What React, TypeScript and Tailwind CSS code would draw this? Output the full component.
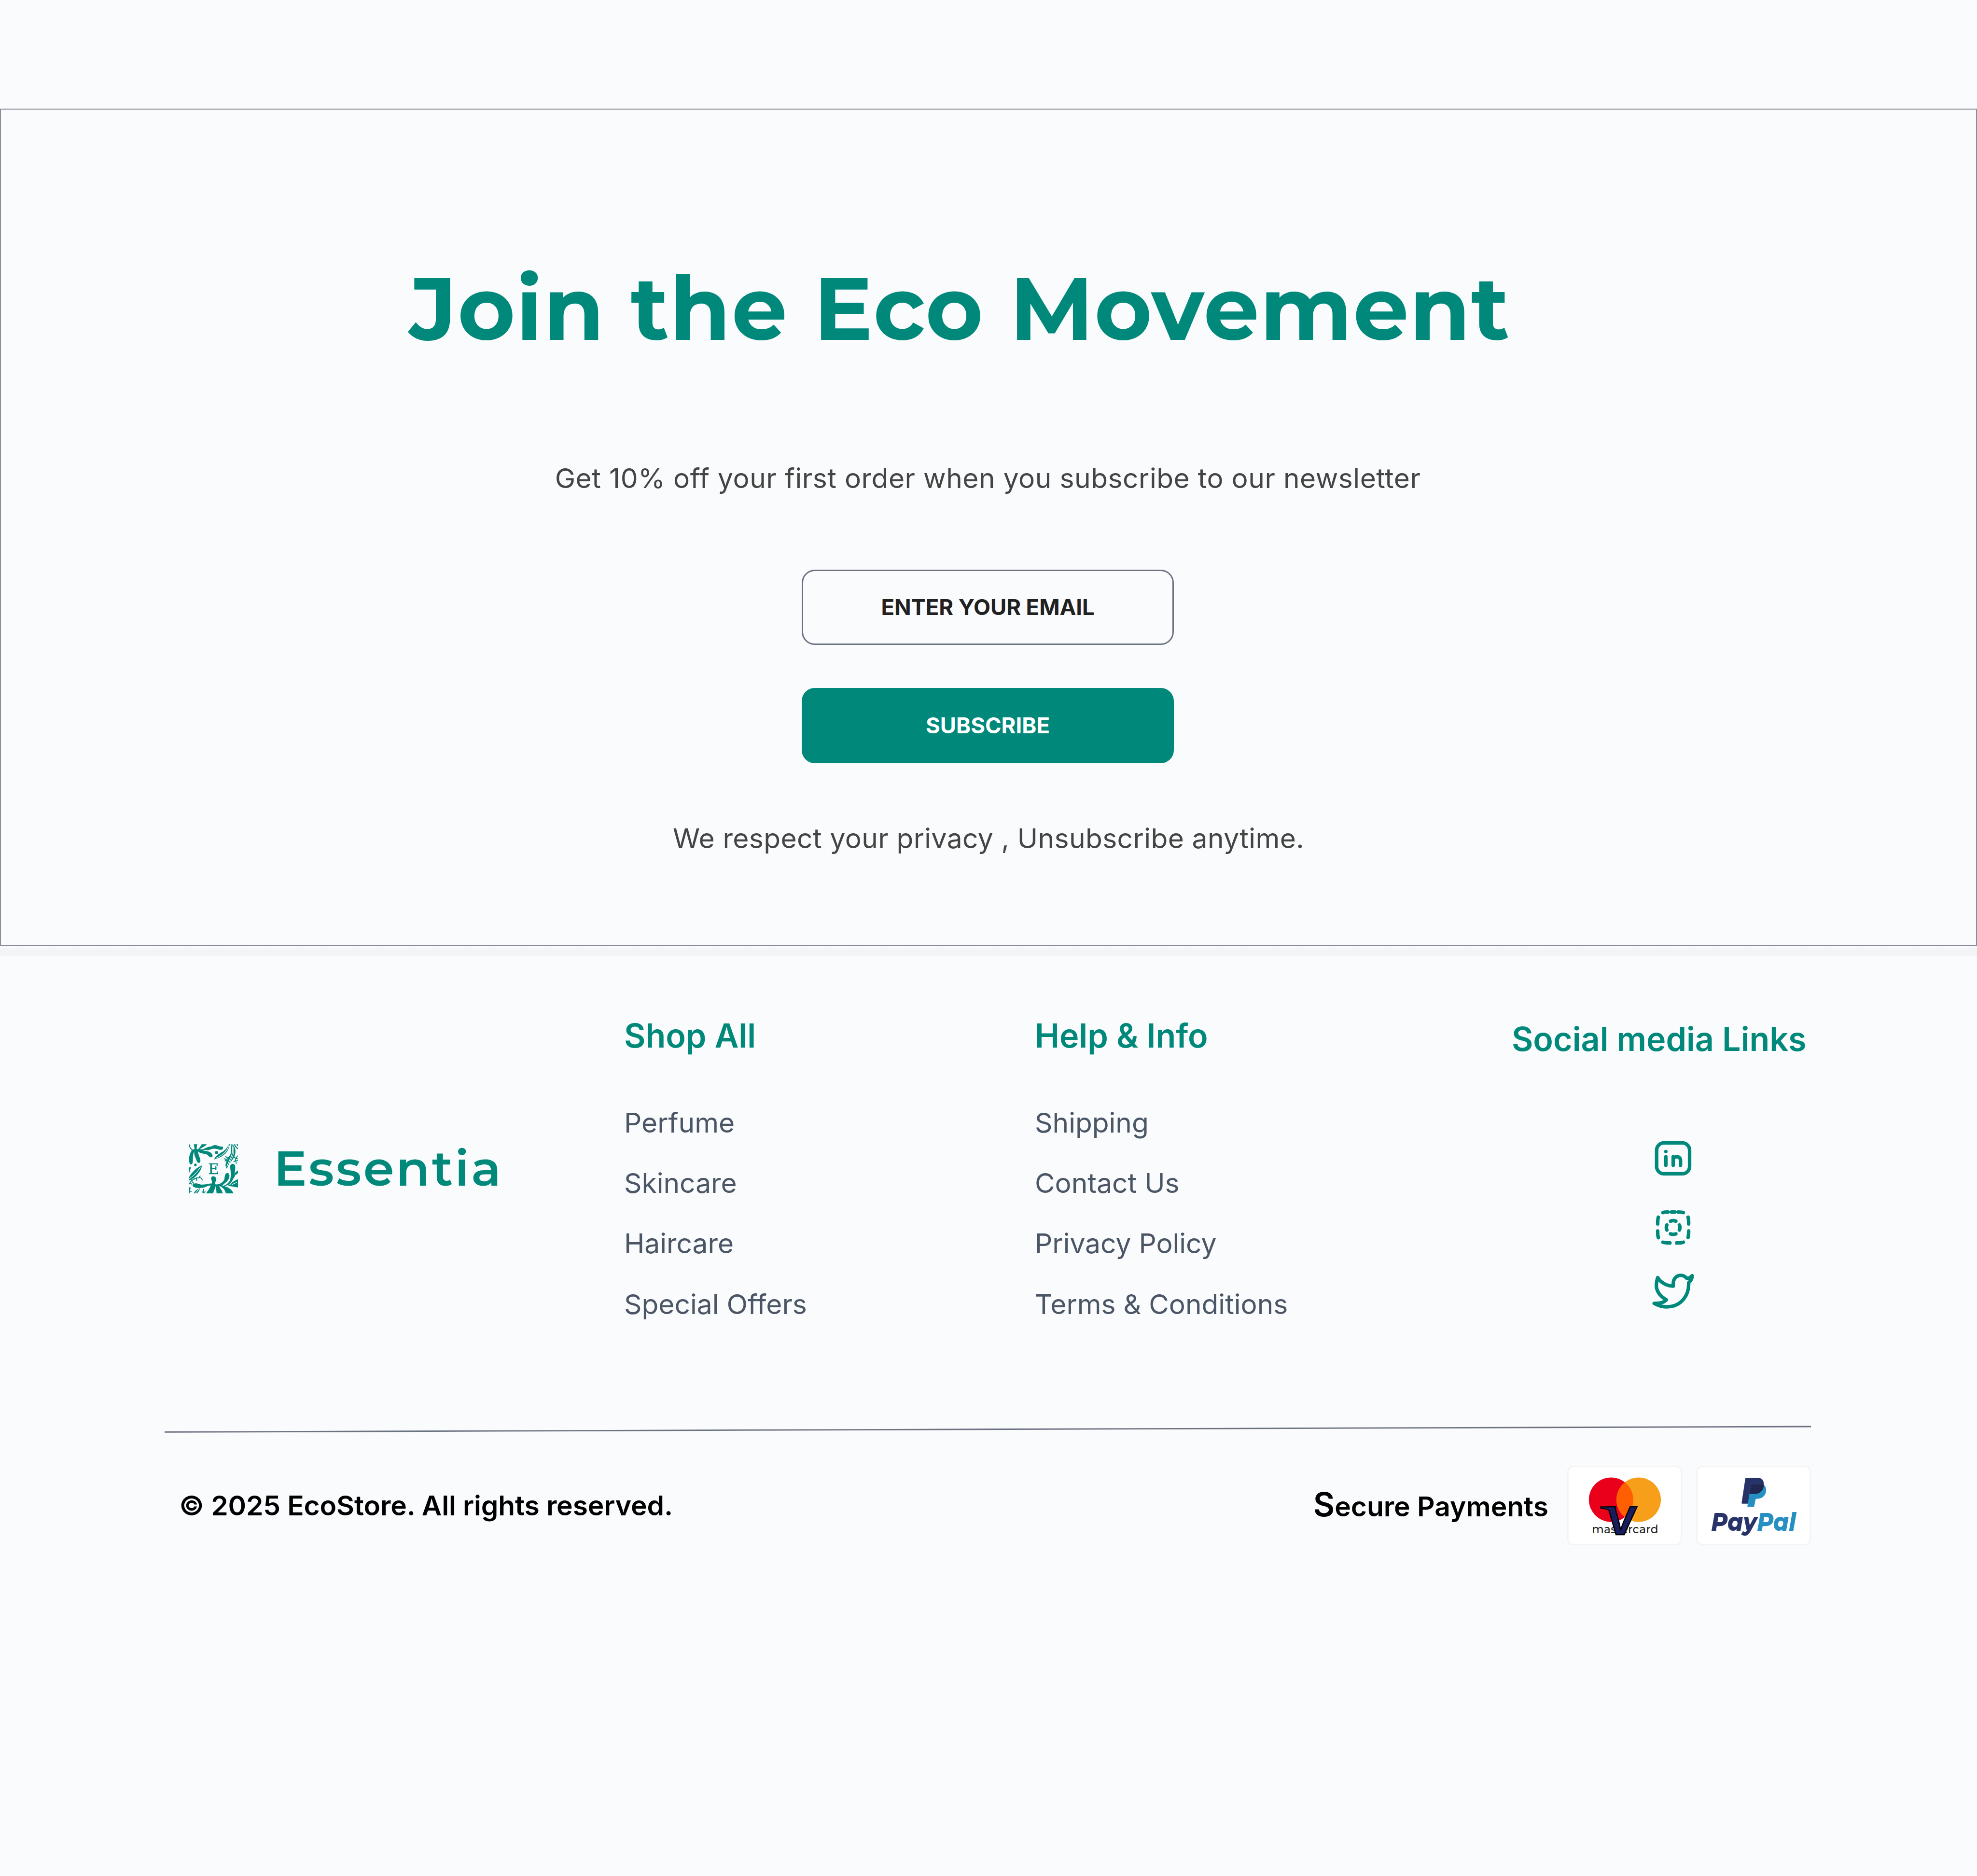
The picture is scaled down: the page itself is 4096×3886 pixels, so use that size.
import { ReactNode } from "react";

interface LinkColumnProps {
  title: string;
  links: string[];
  className?: string;
}

const shopLinks = ["Perfume", "Skincare", "Haircare", "Special Offers"];
const helpLinks = [
  "Shipping",
  "Contact Us",
  "Privacy Policy",
  "Terms & Conditions",
];

const LogoMark = () => (
  <svg viewBox="95 89 325 324" className="size-[102.4px] shrink-0">
    <g fill="#00897b">
      {/* top left bouquet */}
      <path d="M128 89h24c-5 12-5 24-4 38h-15c1-14-2-26-5-38z" />
      <path d="M180 89h34c-10 16-36 20-54 40l-10-4c14-8 22-20 30-36z" />
      <path d="M112 126c12-6 60-5 76-3 16-8 26-16 48-18 14-2 20-10 33-10 16 0 24 12 48 9 6 6 4 17-4 21-18 4-34-8-54-6-16 0-24 9-42 9-12 0-20-2-30 2 22 6 42 2 56 18 10 8 12 20 4 26-12 4-20-8-30-16-18-12-42-2-60-22-2 22 16 44 15 64-2 14-18 16-23 3-5-22-22-38-17-67-12 20-8 44-10 66-2 24-16 26-22 10-6-30-2-56 14-80z" />
      <circle cx="278" cy="144" r="10" />
      <circle cx="139" cy="225" r="8.5" />
      {/* top right leaves */}
      <path d="M306 145c26-12 42-34 53-56h6c-4 32-22 60-50 78-14 10-32 16-53 22 8-18 24-32 44-44z" />
      <path d="M370 89h12c12 44 8 70-10 100-10 20-16 42-26 61-16-18-8-44 8-66 20-28 24-52 16-95z" />
      <path d="M386 89c14 20 20 44 14 68-6 22-20 38-34 56 10-26 26-50 26-76 0-18-4-32-6-48z" />
      <path d="M392 89h8c4 12 10 20 20 26v8c-14-6-22-18-28-34zM408 89h12v14c-6-4-10-8-12-14z" />
      {/* left leaves */}
      <path d="M182 229c-4 30-22 54-44 74-16 14-30 20-43 26v-18c10-22 28-42 46-58 14-12 28-20 41-24z" />
      <path d="M95 246c4-5 8-8 14-9-2 18-6 32-14 46z" />
      <path d="M128 413c6-16 20-28 41-34-4 16-10 26-20 34z" />
      {/* bottom plant */}
      <path d="M237 361c-22-2-28 14-50 14-24 4-60 4-67-14 4-18 28-16 44-10 28 10 52-4 82-4 6-14-4-22-4-36 4-16 28-14 32 2 2 16-6 24-4 40 26 2 46-10 58-30 6-14 0-34 16-44 14-4 22 10 18 26-6 30-34 40-48 58z" />
      <path d="M367 238c0-26 33-28 34 0 0 30-6 70-24 100-12 18-30 26-60 26 26-8 42-20 50-40 8-26 4-56 0-86z" />
      <path d="M208 413c12-16 24-32 34-58h28c4 20-10 34-14 58z" />
      <path d="M278 413c0-22-6-36-8-52h26c0 18 22 32 22 52z" />
      <path d="M340 413c-6-20-14-38-50-54 40 2 84 14 100 54z" />
      <path d="M420 318c-20 8-42 22-66 44 24 4 46 8 66 12z" />
      <path d="M420 262c-14 4-24 20-34 46-4 10-8 20-14 30 14-16 28-44 48-60z" />
    </g>
    <g fill="none" stroke="#00897b" strokeWidth="6" strokeLinecap="round">
      <path d="M97 90c4 18 10 30 22 38" />
      <path d="M96 352c14-26 36-40 70-44 12 2 18 8 17 18M114 328l-6-10M132 318l-4-10M146 310l2 18M118 336l10 10M164 306l6-8M104 344l12 8" />
      <path d="M97 372c6 14 6 28 2 40M97 382l10-4M99 396l12 4M193 386v24M183 402l10 6 10-6" />
      <path d="M368 164c-10 12-22 22-34 36M352 180l-14-10M344 190l-16-6M356 176l2 16M340 196l12 4" />
      <path d="M416 166c-14 14-16 26-8 48M404 182l-10-8M402 196l-10 8M406 182l12 4M404 200l14-4" />
    </g>
    <g fill="none" stroke="#fafbfd" strokeWidth="4" strokeLinecap="round">
      <path d="M360 94c-12 42-40 66-84 86M378 92c14 52-4 78-18 110-6 14-10 22-14 34" />
      <path d="M172 240c-22 34-46 58-76 78M160 386c-8 8-14 18-20 26" />
      <path d="M404 290c-8 22-20 44-36 62M410 340l-30 14" />
    </g>
    <text
      x="258"
      y="286"
      textAnchor="middle"
      fontSize="97"
      fill="#00897b"
      stroke="#00897b"
      strokeWidth="1.5"
      className="font-['DejaVu_Serif',serif]"
    >
      E
    </text>
  </svg>
);

const SocialIcon = ({
  viewBox,
  children,
}: {
  viewBox: string;
  children: ReactNode;
}) => (
  <svg
    viewBox={viewBox}
    className="w-[94.8px] h-[79px]"
    fill="none"
    stroke="#00897b"
    strokeWidth="23"
    strokeLinecap="round"
    strokeLinejoin="round"
  >
    {children}
  </svg>
);

const PaymentCard = ({ children }: { children: ReactNode }) => (
  <div className="w-[238px] h-[165px] bg-white outline-3 -outline-offset-3 outline-[#f3f5f5] rounded-xl">
    <svg viewBox="0 0 251 174" className="size-full">
      {children}
    </svg>
  </div>
);

const LinkColumn = ({ title, links, className }: LinkColumnProps) => (
  <div className={className}>
    <h3 className="text-[68.3px] leading-[84px] font-semibold text-[#00897b]">
      {title}
    </h3>
    <ul className="mt-[98.7px] flex flex-col gap-[45.2px]">
      {links.map((link) => (
        <li key={link} className="text-[56.9px] leading-20 text-gray-600">
          {link}
        </li>
      ))}
    </ul>
  </div>
);

const Newsletter = () => (
  <section className="h-[1735px] border-2 border-[#8a8d99] flex flex-col items-center">
    <h1 className="self-start ml-[846px] mt-[301.8px] font-[Montserrat,sans-serif] text-[182px] leading-[220px] font-bold tracking-[0.01em] text-[#00897b] whitespace-nowrap">
      Join the Eco Movement
    </h1>
    <p className="mt-[202.7px] mr-[3px] text-[56.9px] leading-20 tracking-[0.53px] text-[#444444]">
      Get 10% off your first order when you subscribe to our newsletter
    </p>
    <div className="mt-[149px] mr-[3px] w-[771px] h-[156px] rounded-[27px] border-3 border-gray-500 flex items-center justify-center text-[45.5px] font-bold tracking-[-0.1px] text-[#212121]">
      ENTER YOUR EMAIL
    </div>
    <button className="mt-[88.6px] mr-[3px] w-[771px] h-[156px] rounded-[27px] bg-[#00897b] text-[45.5px] font-bold text-white">
      SUBSCRIBE
    </button>
    <p className="mt-[115.7px] text-[56.9px] leading-20 tracking-[0.4px] text-[#444444]">
      We respect your privacy , Unsubscribe anytime.
    </p>
  </section>
);

const SocialLinks = () => (
  <div className="pt-[7px]">
    <h3 className="text-[68.3px] leading-[84px] font-semibold tracking-[-0.05px] text-[#00897b] whitespace-nowrap">
      Social media Links
    </h3>
    <div className="mt-[166px] ml-[287px] flex flex-col">
      {/* linkedin */}
      <SocialIcon viewBox="138 119 300 250">
        <rect x="180" y="142.5" width="216" height="202.5" rx="48" />
        <circle cx="240.5" cy="199" r="11.5" fill="#00897b" stroke="none" />
        <path d="M240.5 233v56M288.5 233v56M288.5 258c0-16 9-25 24-25s24 10 24 25v31" />
      </SocialIcon>
      <div className="mt-[63.8px]">
        {/* instagram */}
        <SocialIcon viewBox="138 571 300 250">
          <path d="M221 599q11-4 34-4M277 595h22M321 595q24 0 34 4M386 629q4 11 4 44M390 719q0 31-4 43M311 798q34 0 44-5M267 798q-32 0-46-5M187 719q0 31 4 44M191 629q-4 11-4 44" />
          <path d="M271 655q17-7 35 0M271 738q17 7 35 0M247 680q-7 17 0 33M329 680q8 17 0 33" />
        </SocialIcon>
      </div>
      <div className="mt-[52.8px]">
        {/* twitter */}
        <SocialIcon viewBox="138 988 300 250">
          <path d="M187 1024c18 31 58 56 102 56v-18c0-32 23-52 51-52 18 0 30 10 39 20 13 0 26-10 34-18 0 18-8 33-23 46v12c0 60-40 146-145 146-30 0-60-11-81-23 31 2 61-3 80-23-34-20-66-50-66-95 0-20 4-35 9-51z" />
        </SocialIcon>
      </div>
    </div>
  </div>
);

const Footer = () => (
  <footer className="pl-[341px] pr-[344px]">
    <div className="pt-[123.4px] flex">
      <div className="w-[952px] pl-[49.6px] pt-[254.4px] flex items-start">
        <div className="pt-3">
          <LogoMark />
        </div>
        <span className="ml-[74px] font-[Montserrat,sans-serif] text-[102.4px] leading-[124px] font-semibold tracking-[0.04em] text-[#00897b]">
          Essentia
        </span>
      </div>
      <LinkColumn title="Shop All" links={shopLinks} className="w-[851px]" />
      <LinkColumn title="Help & Info" links={helpLinks} className="w-[988px]" />
      <SocialLinks />
    </div>

    <svg viewBox="0 0 3411 16" className="mt-[211.500px] w-[3411px] h-4">
      <path d="M0 13.4 3411 2" stroke="#6b7280" strokeWidth="2.8" />
    </svg>

    <div className="mt-[67px] flex items-center">
      <p className="ml-[30px] text-[56.9px] leading-20 font-semibold tracking-[-0.1px] text-black">
        © 2025 EcoStore. All rights reserved.
      </p>
      <p className="ml-auto mr-[39px] text-[68.3px] leading-20 font-semibold text-black">
        S<span className="text-[56.9px]">ecure Payments</span>
      </p>
      <div className="flex gap-[29px]">
        <PaymentCard>
          <circle cx="95.8" cy="74.3" r="48.5" fill="#eb001b" />
          <circle cx="156.1" cy="74.3" r="48.5" fill="#f79e1b" />
          <path
            d="M125.95 36.3a48.5 48.5 0 0 1 0 76 48.5 48.5 0 0 1 0-76z"
            fill="#ff5f00"
          />
          <text
            x="54"
            y="147.3"
            fontSize="24.5"
            textLength="145"
            fill="#222222"
            className="font-[Montserrat,sans-serif] font-medium"
          >
            mastercard
          </text>
          <path
            d="M73.5 90H106v14l-13-5.500c-5-3.500-12-5-19.500-5.500z"
            fill="#191c5e"
            stroke="#000"
            strokeWidth="2.5"
          />
          <text
            transform="translate(81.5 151) skewX(-5) scale(1.08 1)"
            fontSize="84"
            fill="#191c5e"
            stroke="#000"
            strokeWidth="2.5"
            className="font-[Inter,sans-serif] font-bold"
          >
            V
          </text>
          <path d="M77 91.200H103v6H92c-4-3-9-4.500-15-5z" fill="#191c5e" />
        </PaymentCard>
        <PaymentCard>
          <path
            d="M109.500 26.700h25.500c9 0 13.500 6 13 15-1 13-9 20.300-21 20.300h-6c-2 0-2.700 1-3 3l-3 16.500c-.2 1-.6 1.500-1.600 1.500H101c-1.200 0-1.700-.6-1.500-1.800l8-52.500c.2-1.300.8-2 2-2z"
            fill="#283467"
          />
          <path
            d="M122 41h25c4.500 3 6.500 8 6 14-1 11-9 17.300-20 17.300-2.500 0-3.200 1.500-3.500 3.700l-2.500 12.500c-.2 1-.6 1.500-1.600 1.500h-12c-1 0-1.500-.5-1.300-1.500l7.400-45.500c.2-1.300 1-2 2.500-2z"
            fill="#2790c3"
          />
          <path
            d="M122 41h26c.3 13-8.500 21-21 21h-10.500l3-19c.2-1.300 1-2 2.500-2z"
            fill="#22274f"
          />
          <text
            x="33"
            y="142.3"
            fontSize="56"
            textLength="185"
            lengthAdjust="spacingAndGlyphs"
            fill="#283467"
            className="font-[Montserrat,sans-serif] font-extrabold italic"
          >
            Pay<tspan fill="#2790c3">Pal</tspan>
          </text>
        </PaymentCard>
      </div>
    </div>
  </footer>
);

export default function App() {
  return (
    <div className="w-[4096px] h-[3886px] pt-[225px] overflow-hidden bg-[#fafbfd] font-[Inter,sans-serif]">
      <Newsletter />
      <div className="h-5 bg-linear-to-b from-[#f9fafc] via-[#f2f3f5] to-[#f4f5f7]" />
      <Footer />
    </div>
  );
}
